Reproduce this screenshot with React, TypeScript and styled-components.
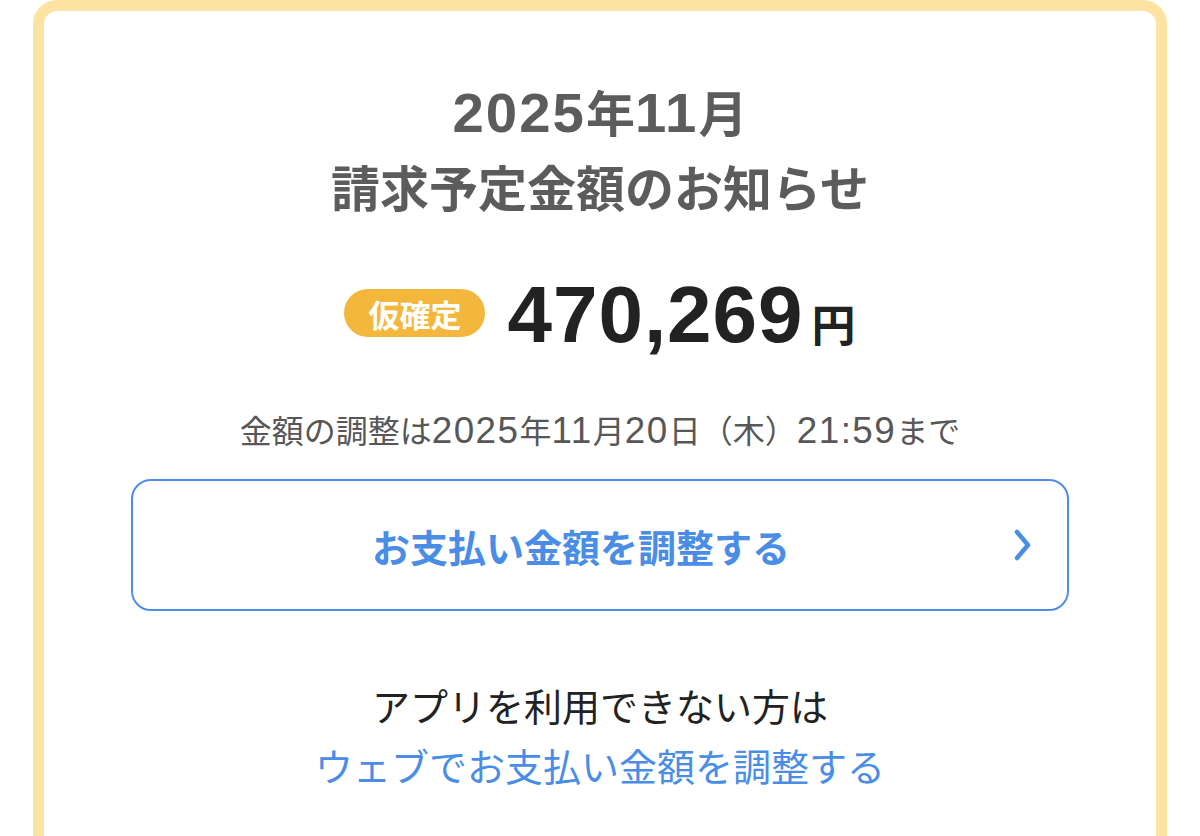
import React from "react";
import styled, { createGlobalStyle } from "styled-components";

const GlobalStyle = createGlobalStyle`
  html, body {
    margin: 0;
    padding: 0;
    background: #ffffff;
    overflow: hidden;
  }
  body {
    font-family: "Noto Sans CJK JP", "Noto Sans", sans-serif;
  }
`;

const Page = styled.div`
  height: 836px;
  overflow: hidden;
  padding: 0 33px;
`;

const Card = styled.section`
  box-sizing: border-box;
  min-height: 940px;
  border: 11px solid #fce3a2;
  border-radius: 24px;
  background: #ffffff;
  padding: 62px 77px 0;
  display: flex;
  flex-direction: column;
  align-items: center;
`;

const Title = styled.h1`
  margin: 0;
  text-align: center;
  color: #5c5c5c;
  font-size: 49px;
  font-weight: 700;
  line-height: 75px;
`;

/* Latin digits set a little larger, like the wide digits of the original */
const Num = styled.span<{ $scale?: number; $spacing?: number }>`
  font-family: "Liberation Sans", Arial, sans-serif;
  font-size: ${(p) => p.$scale ?? 1.15}em;
  letter-spacing: ${(p) => p.$spacing ?? 0}px;
  line-height: 1;
`;

const AmountRow = styled.div`
  margin-top: 46px;
  display: flex;
  align-items: center;
  gap: 22px;
  height: 92px;
`;

const Badge = styled.span`
  display: inline-flex;
  align-items: center;
  justify-content: center;
  width: 141px;
  height: 48px;
  border-radius: 24px;
  background: #f4b73d;
  color: #ffffff;
  font-size: 31px;
  font-weight: 700;
  margin-top: -4px;
`;

const Amount = styled.span`
  display: inline-flex;
  align-items: baseline;
  color: #222222;
`;

const Digits = styled.span`
  font-family: "Liberation Sans", Arial, sans-serif;
  font-size: 80px;
  font-weight: 700;
  letter-spacing: 1px;
`;

const Yen = styled.span`
  margin-left: 8px;
  font-size: 44px;
  font-weight: 700;
`;

const Deadline = styled.p`
  margin: 46px 0 0;
  color: #575757;
  font-size: 32px;
  line-height: 45px;
  text-align: center;
`;

const AdjustButton = styled.button`
  box-sizing: border-box;
  margin-top: 27px;
  width: 938px;
  height: 132px;
  border: 2px solid #4e8ee8;
  border-radius: 20px;
  background: #ffffff;
  position: relative;
  display: flex;
  align-items: center;
  justify-content: center;
  padding: 0;
  cursor: pointer;
  font-family: inherit;
  color: #4a8de6;
  font-size: 38px;
  font-weight: 700;

  span {
    margin-right: 38px;
  }

  svg {
    position: absolute;
    right: 34px;
    top: 50%;
    transform: translateY(-50%);
  }
`;

const Note = styled.div`
  margin-top: 64px;
  text-align: center;
  font-size: 38px;
  line-height: 60px;
`;

const NoteText = styled.div`
  color: #222222;
`;

const WebLink = styled.a`
  color: #4a8de6;
  text-decoration: none;
  display: block;
`;

const Chevron = () => (
  <svg width="20" height="34" viewBox="0 0 20 34" fill="none">
    <polyline
      points="4,4 15,17 4,30"
      stroke="#4a8de6"
      strokeWidth="4.5"
      strokeLinecap="round"
      strokeLinejoin="round"
    />
  </svg>
);

export default function App() {
  return (
    <Page>
      <GlobalStyle />
      <Card>
        <Title>
          <Num $spacing={2}>2025</Num>年<Num $spacing={2}>11</Num>月
          <br />
          請求予定金額のお知らせ
        </Title>
        <AmountRow>
          <Badge>仮確定</Badge>
          <Amount>
            <Digits>470,269</Digits>
            <Yen>円</Yen>
          </Amount>
        </AmountRow>
        <Deadline>
          金額の調整は<Num $spacing={1.5}>2025</Num>年<Num $spacing={1.5}>11</Num>月
          <Num $spacing={1.5}>20</Num>日（木）<Num $spacing={1.5}>21:59</Num>まで
        </Deadline>
        <AdjustButton type="button">
          <span>お支払い金額を調整する</span>
          <Chevron />
        </AdjustButton>
        <Note>
          <NoteText>アプリを利用できない方は</NoteText>
          <WebLink href="#">ウェブでお支払い金額を調整する</WebLink>
        </Note>
      </Card>
    </Page>
  );
}
